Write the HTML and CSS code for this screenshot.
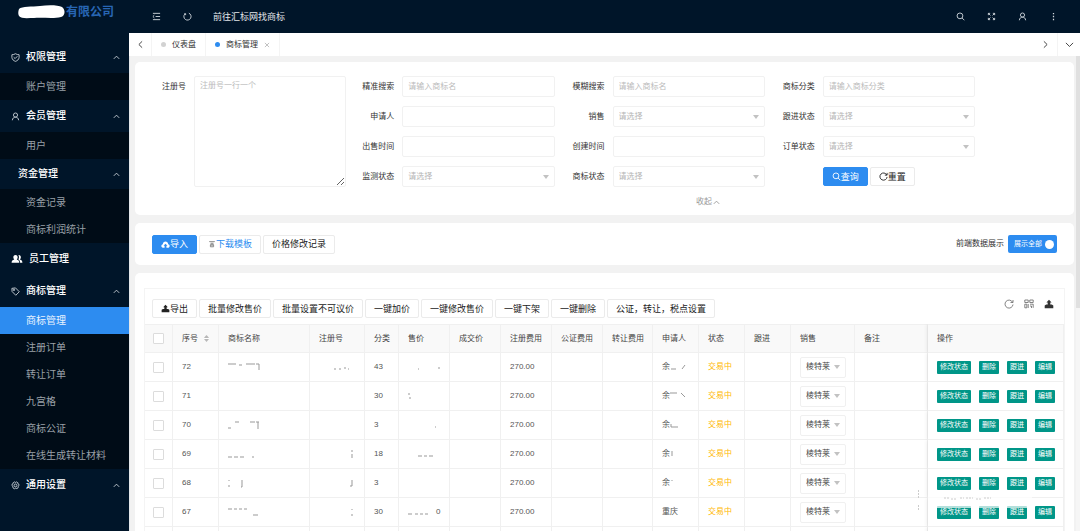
FILE: index.html
```html
<!DOCTYPE html>
<html lang="zh-CN">
<head>
<meta charset="utf-8">
<title>商标管理</title>
<link rel="stylesheet" href="styles.css">
</head>
<body>
<svg class="defs" aria-hidden="true">
  <symbol id="up" viewBox="0 0 10 10"><path d="M2 6.5 5 3.5 8 6.5"/></symbol>
  <symbol id="down" viewBox="0 0 10 10"><path d="M1 3.2 5 7.2 9 3.2"/></symbol>
  <symbol id="left" viewBox="0 0 10 10"><path d="M6.8 1.5 3.2 5l3.6 3.5"/></symbol>
  <symbol id="right" viewBox="0 0 10 10"><path d="M3.2 1.5 6.8 5 3.2 8.5"/></symbol>
  <symbol id="close" viewBox="0 0 10 10"><path d="m1.500 1.500 7 7m0-7-7 7"/></symbol>
  <symbol id="shield" viewBox="0 0 10 10"><path d="M5 .8C6.3 1.6 7.6 1.9 9 1.9v3C8.800 7.300 7 8.600 5 9.300 3 8.600 1.200 7.300 1 4.900v-3c1.400 0 2.700-.3 4-1.100zM3 4.700l1.600 1.500 2.500-2.600"/></symbol>
  <symbol id="user" viewBox="0 0 10 10"><circle cx="5" cy="3.400" r="2.300"/><path d="M1.500 9.200C1.700 7 3 5.700 5 5.700s3.300 1.300 3.500 3.500"/></symbol>
  <symbol id="group" viewBox="0 0 12 10"><path class="solid" d="M4.500 1c1.500 0 2.200 1 2.200 2.300 0 1-.4 1.800-1 2.300 1.700.4 2.600 1.200 2.600 3.200H.6c0-2 .9-2.800 2.700-3.200-.6-.5-1-1.300-1-2.300C2.300 2 3 1 4.500 1zM7.400 1c1.700-.2 2.500.9 2.500 2.300 0 1-.4 1.800-1 2.300 1.600.4 2.500 1.200 2.500 3.200H9.100c0-1.700-.5-2.700-1.700-3.400.8-1.300.8-3 0-4.400z"/></symbol>
  <symbol id="tag" viewBox="0 0 10 10"><path d="M1 1.500 5 1l4.200 4.300-3.900 3.900L1.200 5z"/><circle cx="3.300" cy="3.200" r=".8"/></symbol>
  <symbol id="gear" viewBox="0 0 10 10"><path d="m4 1 1 .6L6 1l1.500.8.1 1.200 1.200.6v1.700L8 6l-.1 1.500-1.400.9L5 8l-1.300.6-1.500-1L2 6l-.9-.8.1-1.700L2.300 3l.2-1.200z"/><circle cx="5" cy="4.900" r="1.600"/></symbol>
  <symbol id="fold" viewBox="0 0 10 10"><path d="M1 1.500h8M4 5h5M1 8.500h8M2.600 3.500 1 5l1.600 1.500"/></symbol>
  <symbol id="refresh" viewBox="0 0 10 10"><path d="M8.600 3.300A4 4 0 1 0 9 5.500M9 1v2.500H6.500"/></symbol>
  <symbol id="reload" viewBox="0 0 10 10"><path d="M6.500 1.300A4 4 0 1 1 2 2.300M1.400 1.900l1.500-.1V3.500"/></symbol>
  <symbol id="search" viewBox="0 0 10 10"><circle cx="4.400" cy="4.300" r="3.200"/><path d="m6.800 6.700 2.500 2.500"/></symbol>
  <symbol id="expand" viewBox="0 0 10 10"><path d="M1.500 3.500v-2h2m3 0h2v2m0 3v2h-2m-3 0h-2v-2M1.500 1.500l2.300 2.300m4.700-2.300L6.200 3.800m2.300 4.700L6.200 6.200M1.500 8.500l2.300-2.300"/></symbol>
  <symbol id="more" viewBox="0 0 10 10"><path class="solid" d="M4.300 1h1.400v1.500H4.300zM4.300 4.300h1.400v1.500H4.300zM4.300 7.600h1.400v1.500H4.300z"/></symbol>
  <symbol id="cloud" viewBox="0 0 10 10"><path class="solid" d="M2.300 8.700C.8 8.600.3 7.500.4 6.500.5 5.500 1.200 4.900 2 4.700 2.100 2.600 3.500 1.600 5 1.600s2.900 1 3 3.100c.9.200 1.600.9 1.600 1.900 0 1.100-.8 2-1.900 2.100H6V6.500h1.200L5 4.200 2.800 6.500H4v2.200z"/></symbol>
  <symbol id="template" viewBox="0 0 10 10"><path d="M1.500 2h7M3 4h4M2.500 6h5M3 6v2.500h4V6M5 4v4"/></symbol>
  <symbol id="export" viewBox="0 0 10 10"><path class="solid" d="M5 .8 7.600 3.500H6.300v2h1.500L9.300 6.500v2.700H.7V6.500l1.500-1h1.500v-2H2.400z"/></symbol>
  <symbol id="columns" viewBox="0 0 10 10"><path d="M.8 1h3.400v2.500H.8zM5.800 1h3.400v2.500H5.800zM.8 5.200h2v3.600h-2zM4.200 5v4M6 5.200h3.200v3.600M6 7h1.500v2"/></symbol>
</svg>
<div class="app">
  <aside class="side">
    <div class="brand"><svg class="mask" viewBox="0 0 48 14" aria-hidden="true"><path d="M1 4C4 1 14 2 22 1s18-1 22 1c4 3 3 9-1 10-8 2-19 0-27 1-6 0-13 1-15-2-1-2-1-4 0-7z"/></svg>有限公司</div>
    <nav class="menu">
      <a class="top" href="#"><svg class="ic"><use href="#shield"/></svg>权限管理<svg class="ic caret"><use href="#up"/></svg></a>
      <div class="sub"><a href="#">账户管理</a></div>
      <a class="top" href="#"><svg class="ic"><use href="#user"/></svg>会员管理<svg class="ic caret"><use href="#up"/></svg></a>
      <div class="sub"><a href="#">用户</a></div>
      <a class="top plain" href="#">资金管理<svg class="ic caret"><use href="#up"/></svg></a>
      <div class="sub"><a href="#">资金记录</a><a href="#">商标利润统计</a></div>
      <a class="top wide" href="#"><svg class="ic"><use href="#group"/></svg>员工管理</a>
      <a class="top" href="#"><svg class="ic"><use href="#tag"/></svg>商标管理<svg class="ic caret"><use href="#up"/></svg></a>
      <div class="sub"><a class="active" href="#">商标管理</a><a href="#">注册订单</a><a href="#">转让订单</a><a href="#">九宫格</a><a href="#">商标公证</a><a href="#">在线生成转让材料</a></div>
      <a class="top" href="#"><svg class="ic"><use href="#gear"/></svg>通用设置<svg class="ic caret"><use href="#up"/></svg></a>
    </nav>
  </aside>
  <div class="main">
    <header class="bar">
      <button aria-label="折叠菜单"><svg class="ic"><use href="#fold"/></svg></button>
      <button aria-label="刷新"><svg class="ic"><use href="#reload"/></svg></button>
      <a href="#">前往汇标网找商标</a>
      <span class="grow"></span>
      <button aria-label="搜索"><svg class="ic"><use href="#search"/></svg></button>
      <button aria-label="全屏"><svg class="ic"><use href="#expand"/></svg></button>
      <button aria-label="用户"><svg class="ic"><use href="#user"/></svg></button>
      <button aria-label="更多"><svg class="ic"><use href="#more"/></svg></button>
    </header>
    <div class="tabs">
      <button aria-label="向左"><svg class="ic"><use href="#left"/></svg></button>
      <a class="tab" href="#"><i></i>仪表盘</a>
      <a class="tab on" href="#"><i></i>商标管理<svg class="ic"><use href="#close"/></svg></a>
      <span class="grow"></span>
      <button aria-label="向右"><svg class="ic"><use href="#right"/></svg></button>
      <button aria-label="标签操作"><svg class="ic"><use href="#down"/></svg></button>
    </div>
    <div class="body">
      <div class="cards">
        <section class="card">
          <form class="filters">
            <label for="no">注册号</label><textarea id="no" placeholder="注册号一行一个"></textarea>
            <label for="exact">精准搜索</label><input id="exact" placeholder="请输入商标名">
            <label for="fuzzy">模糊搜索</label><input id="fuzzy" placeholder="请输入商标名">
            <label for="cls">商标分类</label><input id="cls" placeholder="请输入商标分类">
            <label for="applicant">申请人</label><input id="applicant">
            <label for="sale">销售</label><span class="pick"><select id="sale"><option>请选择</option></select></span>
            <label for="follow">跟进状态</label><span class="pick"><select id="follow"><option>请选择</option></select></span>
            <label for="sold">出售时间</label><input id="sold">
            <label for="created">创建时间</label><input id="created">
            <label for="order">订单状态</label><span class="pick"><select id="order"><option>请选择</option></select></span>
            <label for="watch">监测状态</label><span class="pick"><select id="watch"><option>请选择</option></select></span>
            <label for="state">商标状态</label><span class="pick"><select id="state"><option>请选择</option></select></span>
            <div class="actions"><button type="button" class="btn blue"><svg class="ic"><use href="#search"/></svg>查询</button><button type="button" class="btn"><svg class="ic"><use href="#refresh"/></svg>重置</button></div>
          </form>
          <div class="collapse"><button>收起<svg class="ic"><use href="#up"/></svg></button></div>
        </section>
        <section class="card tools">
          <button class="btn blue"><svg class="ic"><use href="#cloud"/></svg>导入</button>
          <button class="btn link"><svg class="ic"><use href="#template"/></svg>下载模板</button>
          <button class="btn">价格修改记录</button>
          <span class="grow"></span>
          <label for="show">前端数据展示</label>
          <span class="switch"><input type="checkbox" role="switch" id="show" checked><span>展示全部</span><i></i></span>
        </section>
        <section class="card list">
          <div class="frame">
            <div class="toolbar">
              <button class="btn"><svg class="ic"><use href="#export"/></svg>导出</button>
              <button class="btn">批量修改售价</button>
              <button class="btn">批量设置不可议价</button>
              <button class="btn">一键加价</button>
              <button class="btn">一键修改售价</button>
              <button class="btn">一键下架</button>
              <button class="btn">一键删除</button>
              <button class="btn">公证，转让，税点设置</button>
              <span class="grow"></span>
              <div class="views">
                <button aria-label="刷新表格"><svg class="ic"><use href="#refresh"/></svg></button>
                <button aria-label="筛选列"><svg class="ic"><use href="#columns"/></svg></button>
                <button aria-label="导出表格"><svg class="ic dark"><use href="#export"/></svg></button>
              </div>
            </div>
            <table>
              <colgroup><col class="w28"><col class="w46"><col class="w91"><col class="w55"><col class="w34"><col class="w51"><col class="w51"><col class="w51"><col class="w51"><col class="w50"><col class="w46"><col class="w46"><col class="w46"><col class="w64"><col><col class="w136"></colgroup>
              <thead><tr><th><input type="checkbox" aria-label="全选"></th><th>序号<span class="sort"></span></th><th>商标名称</th><th>注册号</th><th>分类</th><th>售价</th><th>成交价</th><th>注册费用</th><th>公证费用</th><th>转让费用</th><th>申请人</th><th>状态</th><th>跟进</th><th>销售</th><th>备注</th><th class="fixed">操作</th></tr></thead>
              <tbody id="rows"></tbody>
            </table>
          </div>
        </section>
      </div>
      <div class="scroll"><i></i></div>
    </div>
  </div>
</div>
<svg class="stamp" viewBox="0 0 116 22" aria-hidden="true"><rect x="10" y="1" width="104" height="18"/><path d="M.5 1v8M.5 16v5M26 9h5M33 10h6M42 9h4M48 9h7M58 10h5M66 9h7"/></svg>
<script src="script.js"></script>
</body>
</html>
```
FILE: styles.css
```css
* { box-sizing: border-box; }
body { margin: 0; height: 100vh; overflow: hidden; background: #f2f2f2; color: #444; font: 8px/12px "Liberation Sans", "Noto Sans CJK SC", sans-serif; }
button, input, select, textarea { font: inherit; color: inherit; margin: 0; }
button { border: 0; padding: 0; background: none; display: flex; align-items: center; justify-content: center; white-space: nowrap; }
a { color: inherit; text-decoration: none; }
.defs { position: absolute; width: 0; height: 0; }
.ic { width: 9px; height: 9px; flex: none; fill: none; stroke: currentColor; stroke-width: 1; }
.solid { fill: currentColor; stroke: none; }
.grow { flex: 1; }
.app { display: flex; height: 100vh; }

.side { width: 129px; flex: none; background: #001529; color: #fff; }
.brand { height: 41px; padding: 4px 0 0 18px; display: flex; align-items: flex-start; color: #2866b4; font-size: 12px; font-weight: 700; line-height: 16px; }
.mask { width: 48px; height: 16px; fill: #fff; }
.menu { font-size: 10px; line-height: 14px; }
.top { display: flex; align-items: center; gap: 6px; height: 32px; padding: 0 8px 0 11px; font-weight: 500; }
.top .ic { color: #cbd2d9; }
.top .caret { margin-left: auto; }
.top.plain { height: 30px; padding-left: 18px; }
.top.wide .ic { width: 12px; height: 10px; color: #fff; }
.sub { background: #000c17; color: #9aa1a8; }
.sub a { display: flex; align-items: center; height: 27px; padding-left: 26px; }
.sub .active { background: #2d8cf0; color: #e8f3ff; }

.main { flex: 1; min-width: 0; display: flex; flex-direction: column; }
.bar { height: 33px; flex: none; display: flex; align-items: center; padding: 0 11px 0 12px; background: #001529; color: #d3d9df; font-size: 8px; }
.bar button { width: 31px; height: 31px; }
.bar a { padding-left: 10px; font-size: 9px; color: #e3e7eb; }
.tabs { height: 23px; flex: none; display: flex; background: #fff; color: #333; }
.tabs button { width: 23px; border: 0 solid #f4f4f4; }
.tabs button:first-child { border-right-width: 1px; }
.tabs button:last-child { border-left-width: 1px; }
.tab { display: flex; align-items: center; gap: 6px; padding: 0 9px; border-right: 1px solid #f4f4f4; }
.tab i { width: 5px; height: 5px; border-radius: 50%; background: #d2d2d2; }
.tab.on i { background: #2d8cf0; }
.tab .ic { width: 6px; height: 6px; color: #999; }

.body { flex: 1; min-height: 0; display: flex; gap: 2px; overflow: hidden; border-left: 1px solid #e4e7ea; }
.cards { flex: 1; min-width: 0; padding: 6px 0 0 5px; display: flex; flex-direction: column; gap: 8px; }
.card { flex: none; background: #fff; border-radius: 5px; }
.scroll { width: 4px; background: #f6f6f6; }
.scroll i { display: block; height: 53%; background: #e0e0e0; }

.filters { display: grid; grid-template-columns: 59px 1fr 56px 1fr 58px 1fr 58px 1fr; grid-auto-rows: 21px; row-gap: 9px; padding: 14px 99px 0 0; }
.filters label { text-align: right; padding-right: 8px; line-height: 21px; color: #333; }
.filters input, .filters textarea, .filters select { width: 100%; height: 100%; border: 1px solid #f1f1f1; border-radius: 2px; background: #fff; padding: 0 5px; outline: 0; }
.filters label[for="no"] { grid-row: span 4; }
.filters textarea { grid-row: span 4; padding: 3px 5px; line-height: 12px; resize: both; }
::placeholder { color: #bbb; }
.pick { position: relative; display: block; }
.pick select { appearance: none; color: #b5b5b5; }
.pick::after { content: ""; position: absolute; right: 6px; top: 50%; margin-top: -2px; border: 3px solid transparent; border-top: 4px solid #c2c2c2; border-bottom: 0; pointer-events: none; }
.actions { grid-column: 8; display: flex; align-items: center; gap: 2px; }
.btn { height: 19px; padding: 0 8px; border: 1px solid #ebebeb; border-radius: 2px; background: #fff; color: #222; font-size: 9px; line-height: 12px; }
.btn.blue { background: #2d8cf0; border-color: #2d8cf0; color: #fff; }
.btn.link { color: #2d8cf0; }
.btn.link .ic { color: #777; width: 8px; height: 8px; }
.collapse { height: 28px; padding: 2px 0 0 208px; display: flex; align-items: center; justify-content: center; color: #999; }
.tools { display: flex; align-items: center; gap: 2px; height: 42px; padding: 0 17px; }
.tools label { padding-right: 2px; color: #333; }
.switch { position: relative; display: flex; align-items: center; gap: 3px; height: 18px; padding: 0 3px 0 6px; border-radius: 2px; background: #2d8cf0; color: #fff; font-size: 7px; }
.switch input { position: absolute; inset: 0; width: 100%; height: 100%; opacity: 0; }
.switch i { width: 9px; height: 9px; border-radius: 50%; background: #fff; }

.list { padding: 15px 9px; }
.frame { border: 1px solid #f4f4f4; border-bottom: 0; }
.toolbar { display: flex; gap: 2px; height: 35px; padding: 10px 8px 0 7px; }
.views { display: flex; align-items: flex-start; gap: 10px; padding: 0 2px; color: #666; }
.views .ic { width: 10px; height: 10px; stroke-width: 0.8; }
.views .dark { color: #333; }
table { width: 100%; table-layout: fixed; border-collapse: separate; border-spacing: 0; }
th, td { height: 29px; padding: 0 0 0 9px; text-align: left; font-weight: 400; border: 0 solid #f0f0f0; border-width: 0 1px 1px 0; white-space: nowrap; overflow: hidden; }
th { background: #f9f9f9; color: #444; border-top-width: 1px; }
td { color: #555; }
td svg { display: inline-block; vertical-align: middle; fill: none; stroke: #999; stroke-width: 1; }
th:first-child, td:first-child { padding-left: 8px; }
th input, td input { appearance: none; display: block; width: 11px; height: 11px; border: 1px solid #dcdcdc; border-radius: 1px; background: #fff; }
.w28 { width: 28px; } .w34 { width: 34px; } .w46 { width: 46px; } .w50 { width: 50px; } .w51 { width: 51px; }
.w55 { width: 55px; } .w64 { width: 64px; } .w91 { width: 91px; } .w136 { width: 136px; }
.sort { display: inline-block; vertical-align: middle; margin-left: 6px; width: 5px; height: 7px; background: linear-gradient(#fff, #fff) center / 100% 1px no-repeat, #b8b8b8; clip-path: polygon(50% 0, 100% 40%, 100% 60%, 50% 100%, 0 60%, 0 40%); }
td.state { color: #ffb800; }
td .pick { width: 46px; height: 21px; }
td select { width: 100%; height: 100%; border: 1px solid #f0f0f0; border-radius: 2px; background: #fff; padding: 0 5px; }
td .pick select { color: #444; }
.fixed { box-shadow: -1px 0 4px rgba(0, 0, 0, 0.08); clip-path: inset(0 0 0 -6px); position: relative; }
td.fixed { background: #fff; }
.ops { display: flex; gap: 8px; }
.ops button { height: 13px; padding: 0 3px; border-radius: 1px; background: #009688; color: #fff; font-size: 7px; }
.stamp { position: absolute; right: 46px; bottom: 20px; width: 116px; height: 22px; fill: rgba(255, 255, 255, 0.7); stroke: none; pointer-events: none; }
.stamp path { fill: none; stroke: #ccc; stroke-dasharray: 2 1; }
```
FILE: script.js
```javascript
// Each row: number, name strokes, registration strokes, class, price strokes, price digit, applicant, applicant strokes
const rows = [
  [72, "M0 3h8M11 4h3M18 3h9M28 3h3v6", "M15 8h2M20 8h2M25 7h2M29 8h1", 43, "M10 8h1M30 7h2", "", "余", "M1 8h5M12 8l3-4"],
  [71, "", "", 30, "M1 3v2M2 7v2", "", "余", "M0 3h7M11 3l4 4"],
  [70, "M0 9h3M7 3h4M22 3h5M28 3h3M30 3v7", "", 3, "M27 8h1", "", "余", "M1 5v3h7"],
  [69, "M0 9h4M6 9h4M12 9h4M24 9h2", "M33 2v2M33 6v4", 18, "M10 8h4M16 8h3M21 8h4", "", "余", "M2 3v5"],
  [68, "M1 3v1M1 8v2M14 3v7h-1", "M33 3v6h-2", 3, "", "", "余", "M2 3v1"],
  [67, "M0 3h4M6 3h3M11 3h3M16 3h3M25 9h5", "M33 3v1M33 8v2", 30, "M0 8h4M7 8h3M12 8h3M17 8h3", "0", "重庆", ""],
  ["", "", "", "", "", "", "", ""]
];
const mark = (d, w) => d ? `<svg width="${w}" height="12" viewBox="0 0 ${w} 12"><path d="${d}"/></svg>` : "";
document.getElementById("rows").innerHTML = rows.map(([n, name, reg, cls, price, digit, who, rest]) => n === ""
  ? "<tr>" + "<td></td>".repeat(15) + '<td class="fixed"></td></tr>'
  : `<tr><td><input type="checkbox" aria-label="选择 ${n}"></td><td>${n}</td><td>${mark(name, 40)}</td><td>${mark(reg, 40)}</td><td>${cls}</td><td>${mark(price, digit ? 28 : 36)}${digit}</td><td></td><td>270.00</td><td></td><td></td><td>${who}${mark(rest, 18)}</td><td class="state">交易中</td><td></td><td><span class="pick"><select aria-label="销售 ${n}"><option>棱特莱</option></select></span></td><td></td><td class="fixed"><div class="ops"><button>修改状态</button><button>删除</button><button>跟进</button><button>编辑</button></div></td></tr>`).join("");
```
